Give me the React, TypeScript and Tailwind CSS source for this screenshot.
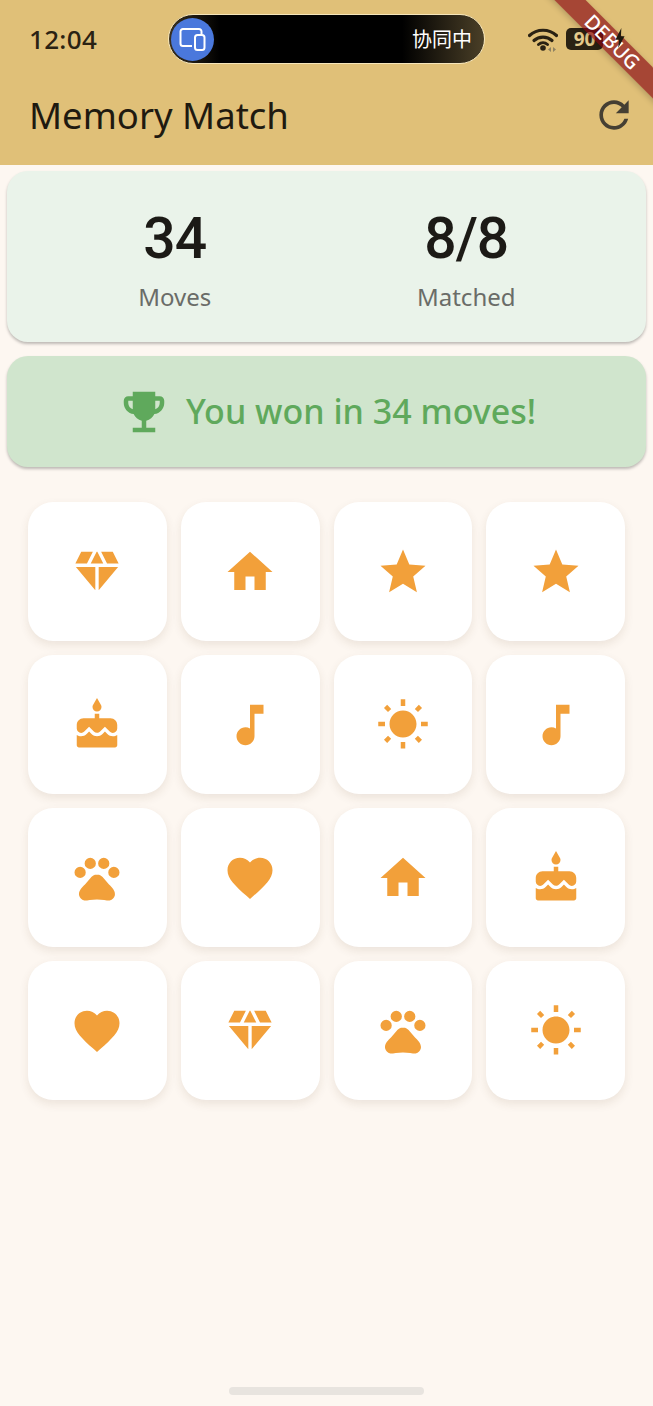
const paths: Record<string, string> = {
  diamond: 'M12.16 3h-.32L9.21 8.25h5.58zm4.3 5.25h5.16L19 3h-5.16zm4.92 1.5h-8.63V20.1zM11.25 20.1V9.75H2.62zM7.54 8.25 10.16 3H5L2.38 8.25z',
  home: 'M10 20v-6h4v6h5v-8h3L12 3 2 12h3v8z',
  star: 'M12 17.27L18.18 21l-1.64-7.03L22 9.24l-7.19-.61L12 2 9.19 8.63 2 9.24l5.46 4.73L5.82 21z',
  cake: 'M12 6c1.11 0 2-.9 2-2 0-.38-.1-.73-.29-1.03L12 0l-1.71 2.97c-.19.3-.29.65-.29 1.03 0 1.1.9 2 2 2zm4.6 9.99l-1.07-1.07-1.08 1.07c-1.3 1.3-3.58 1.31-4.89 0l-1.07-1.07-1.09 1.07C6.75 16.64 5.88 17 4.96 17c-.73 0-1.4-.23-1.96-.61V21c0 .55.45 1 1 1h16c.55 0 1-.45 1-1v-4.61c-.56.38-1.23.61-1.96.61-.92 0-1.79-.36-2.44-1.01zM18 9h-5V7h-2v2H6c-1.66 0-3 1.34-3 3v1.54c0 1.08.88 1.96 1.96 1.96.52 0 1.02-.2 1.38-.57l2.14-2.13 2.13 2.13c.74.74 2.03.74 2.77 0l2.14-2.13 2.13 2.13c.37.37.86.57 1.38.57 1.08 0 1.96-.88 1.96-1.96V12C21 10.34 19.66 9 18 9z',
  music: 'M12 3v10.55c-.59-.34-1.27-.55-2-.55-2.21 0-4 1.79-4 4s1.79 4 4 4 4-1.79 4-4V7h4V3h-6z',
  sun: 'M6.76 4.84l-1.8-1.79-1.41 1.41 1.79 1.79 1.42-1.41zM4 10.5H1v2h3v-2zm9-9.95h-2V3.5h2V.55zm7.45 3.91l-1.41-1.41-1.79 1.79 1.41 1.41 1.79-1.79zm-3.21 13.7l1.79 1.8 1.41-1.41-1.8-1.79-1.4 1.4zM20 10.5v2h3v-2h-3zm-8-5c-3.31 0-6 2.69-6 6s2.69 6 6 6 6-2.69 6-6-2.69-6-6-6zm-1 16.95h2V19.5h-2v2.95zm-7.45-3.91l1.41 1.41 1.79-1.8-1.41-1.41-1.79 1.8z',
  pets: 'M2 9.5a2.5 2.5 0 1 0 5 0a2.5 2.5 0 1 0-5 0M6.5 5.5a2.5 2.5 0 1 0 5 0a2.5 2.5 0 1 0-5 0M12.5 5.5a2.5 2.5 0 1 0 5 0a2.5 2.5 0 1 0-5 0M17 9.5a2.5 2.5 0 1 0 5 0a2.5 2.5 0 1 0-5 0M17.34 14.86c-.87-1.02-1.6-1.89-2.48-2.91-.46-.54-1.05-1.08-1.75-1.32-.11-.04-.22-.07-.33-.09-.25-.04-.52-.04-.78-.04s-.53 0-.79.05c-.11.02-.22.05-.33.09-.7.24-1.28.78-1.75 1.32-.87 1.02-1.6 1.89-2.48 2.91-1.31 1.31-2.92 2.76-2.62 4.79.29 1.02 1.02 2.03 2.33 2.32.73.15 3.06-.44 5.54-.44h.18c2.48 0 4.81.58 5.54.44 1.31-.29 2.04-1.31 2.33-2.32.31-2.04-1.3-3.49-2.61-4.8z',
  heart: 'M12 21.35l-1.45-1.32C5.4 15.36 2 12.28 2 8.5 2 5.42 4.42 3 7.5 3c1.74 0 3.41.81 4.5 2.09C13.09 3.81 14.76 3 16.5 3 19.58 3 22 5.42 22 8.5c0 3.78-3.4 6.86-8.55 11.54L12 21.35z',
  trophy: 'M19 5h-2V3H7v2H5c-1.1 0-2 .9-2 2v1c0 2.55 1.92 4.63 4.39 4.94.63 1.5 1.98 2.63 3.61 2.96V19H7v2h10v-2h-4v-3.1c1.63-.33 2.98-1.46 3.61-2.96C19.08 12.63 21 10.55 21 8V7c0-1.1-.9-2-2-2zM5 8V7h2v3.82C5.84 10.4 5 9.3 5 8zm14 0c0 1.3-.84 2.4-2 2.82V7h2v1z',
  refresh: 'M17.65 6.35C16.2 4.9 14.21 4 12 4c-4.42 0-7.99 3.58-7.99 8s3.57 8 7.99 8c3.73 0 6.84-2.55 7.73-6h-2.08c-.82 2.33-3.04 4-5.65 4-3.31 0-6-2.69-6-6s2.69-6 6-6c1.66 0 3.14.69 4.22 1.78L13 11h7V4l-2.35 2.35z',
};

const board = [
  'diamond', 'home', 'star', 'star',
  'cake', 'music', 'sun', 'music',
  'pets', 'heart', 'home', 'cake',
  'heart', 'diamond', 'pets', 'sun',
];

function Icon({ name, className }: { name: string; className: string }) {
  return (
    <svg viewBox="0 0 24 24" fill="currentColor" className={className}>
      <path d={paths[name]} />
    </svg>
  );
}

function StatusBar() {
  return (
    <div className="h-[80px] flex items-start pl-[29px] pt-[14px]">
      <span className="w-[139px] mt-[9px] text-[26px] leading-[32px] font-medium tracking-[0.3px] text-[#2a2213] font-['Noto_Sans',sans-serif]">
        12:04
      </span>
      <div className="w-[317px] h-[50px] rounded-full border-[1.5px] border-[#f6e6bb] bg-[linear-gradient(90deg,#3a3120_0%,#000000_16%,#000000_74%,#4a3f27_100%)] flex items-center justify-between pl-[2px] pr-[12px]">
        <div className="w-[43px] h-[43px] rounded-full bg-[#4a78dc] flex items-center justify-center">
          <svg viewBox="0 0 30 30" fill="none" stroke="white" strokeWidth="2" className="w-[30px] h-[30px]">
            <path d="M14 22H5a2.500 2.500 0 0 1-2.500-2.500v-12A2.500 2.500 0 0 1 5 5h16a2.500 2.500 0 0 1 2.500 2.500V10" />
            <rect x="17" y="11" width="9.500" height="15" rx="2.500" />
          </svg>
        </div>
        <span className="text-[20px] leading-none text-white font-['Noto_Sans_CJK_SC',sans-serif]">协同中</span>
      </div>
      <svg viewBox="0 0 30 26" fill="none" className="ml-[43px] mt-[13px] w-[30px] h-[26px] text-[#2a2213]">
        <path d="M1.500 8.500C9 1.500 21 1.500 28.500 8.500" stroke="currentColor" strokeWidth="3.200" strokeLinecap="round" />
        <path d="M6 13.500c5-4.600 13-4.600 18 0" stroke="currentColor" strokeWidth="3.200" strokeLinecap="round" />
        <path d="M10.500 17.500c2.600-2.300 6.400-2.300 9 0" stroke="currentColor" strokeWidth="3" strokeLinecap="round" />
        <circle cx="15" cy="21" r="2.800" fill="currentColor" />
        <path d="M23 20v5l-3-2.500zM25 20v5l3-2.500z" fill="#8f8262" />
      </svg>
      <div className="ml-[8px] mt-[14px] w-[37px] h-[22px] rounded-[5px] bg-[#2a2213] flex items-center justify-center">
        <span className="text-[19px] leading-none font-bold text-[#e6cc8c] font-['Noto_Sans',sans-serif]">90</span>
      </div>
      <svg viewBox="0 0 10 22" className="relative z-10 ml-[12px] mt-[14px] w-[10px] h-[20px] text-[#1f190d]" fill="currentColor">
        <path d="M6.500 0 0 13h4l-1 9 7-13H6z" />
      </svg>
    </div>
  );
}

function Stat({ value, label }: { value: string; label: string }) {
  return (
    <div className="flex flex-col items-center">
      <span className="text-[57px] leading-[66px] font-medium text-[#1c1a16] font-['Roboto',sans-serif] tracking-[-1px]">
        {value}
      </span>
      <span className="mt-[10px] text-[24px] leading-[30px] text-[#6a6c68]">{label}</span>
    </div>
  );
}

export default function App() {
  return (
    <div className="relative w-full h-[1406px] overflow-hidden bg-[#fdf7f1] flex flex-col font-['Noto_Sans',sans-serif]">
      <div className="bg-[#e0c078] h-[165px] shrink-0">
        <StatusBar />
        <div className="h-[85px] flex items-start justify-between pl-[29px] pr-[17px]">
          <h1 className="mt-[9px] text-[36.5px] leading-[52px] text-[#1f1a10]">Memory Match</h1>
          <Icon name="refresh" className="mt-[13px] w-[44px] h-[44px] text-[#453f33]" />
        </div>
      </div>

      <div className="mx-[7px] mt-[6px] h-[171px] rounded-[21px] bg-[#eaf3ea] shadow-[0_2px_3px_rgba(0,0,0,0.25)] grid grid-cols-2 pl-[22px] pr-[34px] pt-[35px]">
        <Stat value="34" label="Moves" />
        <Stat value="8/8" label="Matched" />
      </div>

      <div className="mx-[7px] mt-[14px] h-[111px] rounded-[21px] bg-[#d0e5cd] shadow-[0_2px_3px_rgba(0,0,0,0.25)] flex items-center justify-center gap-[15px] text-[#5fa95c]">
        <Icon name="trophy" className="w-[54px] h-[54px]" />
        <span className="text-[34px] leading-none font-medium -mt-[2px]">You won in 34 moves!</span>
      </div>

      <div className="mt-[35px] px-[28px] grid grid-cols-4 gap-[14px]">
        {board.map((name, i) => (
          <div
            key={i}
            className="h-[139px] rounded-[25px] bg-white shadow-[0_4px_10px_rgba(90,60,30,0.1)] flex items-center justify-center text-[#f2a03a]"
          >
            <Icon name={name} className="w-[54px] h-[54px]" />
          </div>
        ))}
      </div>

      <div className="mt-auto mb-[11px] mx-auto w-[195px] h-[8px] rounded-full bg-[#e8e4df]" />

      <div className="absolute left-[511px] top-[30px] w-[200px] h-[22px] rotate-45 bg-[#870511]/65 shadow-[0_2px_6px_rgba(0,0,0,0.2)] flex items-center justify-center">
        <span className="ml-[3px] text-[20px] leading-none font-medium text-white">DEBUG</span>
      </div>
    </div>
  );
}
